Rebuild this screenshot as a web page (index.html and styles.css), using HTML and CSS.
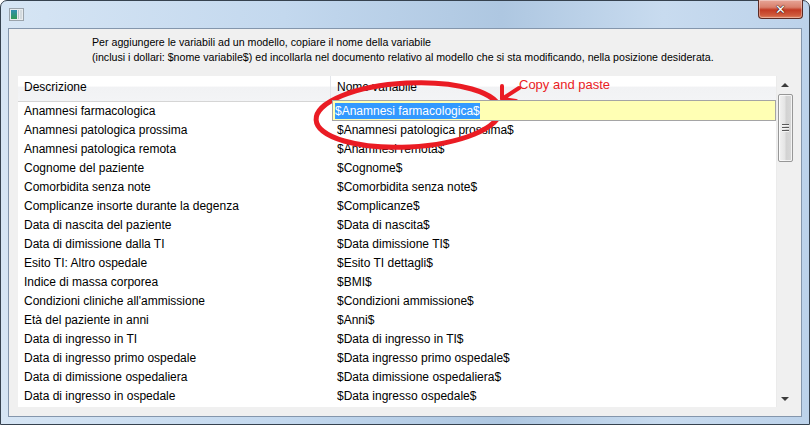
FILE: index.html
```html
<!DOCTYPE html>
<html>
<head>
<meta charset="utf-8">
<link rel="stylesheet" href="styles.css">
</head>
<body>
<div class="window">
  <div class="titlebar">
    <svg class="app-icon" width="15" height="13" viewBox="0 0 15 13">
      <defs>
        <linearGradient id="ig" x1="0" y1="0" x2="0" y2="1">
          <stop offset="0" stop-color="#2f8fb0"/>
          <stop offset="1" stop-color="#2f9a55"/>
        </linearGradient>
      </defs>
      <rect x="0.5" y="0.5" width="14" height="12" fill="#e8ecef" stroke="#9aa3ab"/>
      <rect x="2" y="2" width="6" height="9" fill="url(#ig)"/>
      <rect x="9" y="2" width="1" height="9" fill="#b9c2c9"/>
      <rect x="11" y="2" width="2" height="9" fill="#d3dadf"/>
    </svg>
    <div class="close-btn"><span class="close-x">✕</span></div>
  </div>
  <div class="client">
    <div class="instructions">
      <div>Per aggiungere le variabili ad un modello, copiare il nome della variabile</div>
      <div>(inclusi i dollari: $nome variabile$) ed incollarla nel documento relativo al modello che si sta modificando, nella posizione desiderata.</div>
    </div>
    <div class="list">
      <div class="table">
        <div class="header">
          <div class="hcell col1">Descrizione</div>
          <div class="hcell col2">Nome variabile</div>
        </div>
        <div class="row">
          <div class="cell col1">Anamnesi farmacologica</div>
          <div class="cell col2 editing"><div class="editor"><span class="sel">$Anamnesi farmacologica$</span></div></div>
        </div>
        <div class="row"><div class="cell col1">Anamnesi patologica prossima</div><div class="cell col2">$Anamnesi patologica prossima$</div></div>
        <div class="row"><div class="cell col1">Anamnesi patologica remota</div><div class="cell col2">$Anamnesi remota$</div></div>
        <div class="row"><div class="cell col1">Cognome del paziente</div><div class="cell col2">$Cognome$</div></div>
        <div class="row"><div class="cell col1">Comorbidita senza note</div><div class="cell col2">$Comorbidita senza note$</div></div>
        <div class="row"><div class="cell col1">Complicanze insorte durante la degenza</div><div class="cell col2">$Complicanze$</div></div>
        <div class="row"><div class="cell col1">Data di nascita del paziente</div><div class="cell col2">$Data di nascita$</div></div>
        <div class="row"><div class="cell col1">Data di dimissione dalla TI</div><div class="cell col2">$Data dimissione TI$</div></div>
        <div class="row"><div class="cell col1">Esito TI: Altro ospedale</div><div class="cell col2">$Esito TI dettagli$</div></div>
        <div class="row"><div class="cell col1">Indice di massa corporea</div><div class="cell col2">$BMI$</div></div>
        <div class="row"><div class="cell col1">Condizioni cliniche all'ammissione</div><div class="cell col2">$Condizioni ammissione$</div></div>
        <div class="row"><div class="cell col1">Età del paziente in anni</div><div class="cell col2">$Anni$</div></div>
        <div class="row"><div class="cell col1">Data di ingresso in TI</div><div class="cell col2">$Data di ingresso in TI$</div></div>
        <div class="row"><div class="cell col1">Data di ingresso primo ospedale</div><div class="cell col2">$Data ingresso primo ospedale$</div></div>
        <div class="row"><div class="cell col1">Data di dimissione ospedaliera</div><div class="cell col2">$Data dimissione ospedaliera$</div></div>
        <div class="row"><div class="cell col1">Data di ingresso in ospedale</div><div class="cell col2">$Data ingresso ospedale$</div></div>
      </div>
      <div class="scrollbar">
        <div class="sb-btn"><span class="tri-up"></span></div>
        <div class="thumb"><span class="grip"></span><span class="grip"></span><span class="grip"></span></div>
        <div class="sb-space"></div>
        <div class="sb-btn"><span class="tri-down"></span></div>
      </div>
    </div>
  </div>
</div>
<svg class="annotation" width="810" height="425" viewBox="0 0 810 425">
  <ellipse cx="408" cy="115" rx="92" ry="32" transform="rotate(-3 408 115)" fill="none" stroke="#ea1c24" stroke-width="5"/>
  <path d="M519 88 L502 99 M502 86 L502 99 L516 101" fill="none" stroke="#ea1c24" stroke-width="4" stroke-linecap="round" stroke-linejoin="round"/>
</svg>
<div class="note">Copy and paste</div>
</body>
</html>
```
FILE: styles.css
```css
html, body {
  margin: 0;
  padding: 0;
  background: #ffffff;
}
body {
  position: relative;
  width: 810px;
  height: 425px;
  overflow: hidden;
  font-family: "Liberation Sans", Arial, sans-serif;
  font-size: 12px;
  color: #000;
}
.window {
  width: 810px;
  height: 425px;
  box-sizing: border-box;
  border: 1px solid #36424f;
  border-radius: 7px 7px 0 0;
  background: linear-gradient(90deg, #d6e5f4 0%, #c3d8ee 35%, #aec7e1 62%, #c8dbef 82%, #bcd2ea 100%);
  display: flex;
  flex-direction: column;
}
.titlebar {
  height: 27px;
  display: flex;
  align-items: flex-start;
  padding-left: 8px;
}
.app-icon {
  margin-top: 7px;
  display: block;
}
.close-btn {
  margin-left: auto;
  margin-right: 6px;
  margin-top: -1px;
  width: 45px;
  height: 19px;
  box-sizing: border-box;
  border: 1px solid #5b2a24;
  border-top: none;
  border-radius: 0 0 4px 4px;
  background: linear-gradient(180deg, #e7a597 0%, #d9806c 40%, #c23a23 55%, #cf5a3c 85%, #e08866 100%);
  box-shadow: inset 0 0 0 1px rgba(255,255,255,0.35);
  display: flex;
  align-items: center;
  justify-content: center;
}
.close-x {
  color: #ffffff;
  font-family: "DejaVu Sans", sans-serif;
  font-weight: bold;
  font-size: 13px;
  line-height: 13px;
  text-shadow: 0 0 1px #3a1a16, 0 0 1px #3a1a16, 0 0 1px #3a1a16;
}
.client {
  flex: 1;
  margin: 0 7px 7px 7px;
  border: 1px solid #8496ac;
  background: #f0f0f0;
  display: flex;
  flex-direction: column;
}
.instructions {
  padding: 6px 0 0 83px;
  font-size: 10.65px;
  line-height: 15px;
  color: #000;
}
.list {
  margin: 11px 8px 9px 9px;
  flex: 1;
  display: flex;
  background: #ffffff;
  min-height: 0;
}
.table {
  flex: 1;
  overflow: hidden;
  background: #ffffff;
}
.header {
  height: 26px;
  box-sizing: border-box;
  display: flex;
  background: linear-gradient(180deg, #ffffff 0%, #ffffff 40%, #f1f2f4 45%, #f3f4f6 100%);
  border-bottom: 1px solid #d5d5d5;
}
.hcell {
  line-height: 23px;
  padding-left: 6px;
  box-sizing: border-box;
}
.hcell.col1 {
  border-right: 1px solid #e3e6eb;
}
.col1 {
  width: 313px;
  flex: none;
  box-sizing: border-box;
  padding-left: 6px;
}
.col2 {
  flex: 1;
  padding-left: 6px;
}
.row {
  height: 19px;
  display: flex;
  line-height: 19px;
  white-space: nowrap;
}
.cell {
  overflow: hidden;
}
.editing {
  position: relative;
  overflow: visible;
}
.editor {
  position: absolute;
  left: 1px;
  right: 0;
  top: -2px;
  height: 21px;
  box-sizing: border-box;
  border: 1px solid #a5a5a5;
  background: #ffffb4;
  padding-left: 2px;
  display: flex;
  align-items: center;
  z-index: 1;
}
.sel {
  background: #3399ff;
  color: #ffffff;
  line-height: 16px;
}
.scrollbar {
  width: 17px;
  flex: none;
  background: #f0f0f0;
  border-left: 1px solid #ebebeb;
  box-sizing: border-box;
  display: flex;
  flex-direction: column;
  align-items: center;
}
.sb-btn {
  height: 17px;
  width: 100%;
  display: flex;
  align-items: center;
  justify-content: center;
}
.tri-up {
  width: 0;
  height: 0;
  border-left: 4px solid transparent;
  border-right: 4px solid transparent;
  border-bottom: 4px solid #3c3c3c;
}
.tri-down {
  width: 0;
  height: 0;
  border-left: 4px solid transparent;
  border-right: 4px solid transparent;
  border-top: 4px solid #3c3c3c;
}
.thumb {
  margin-top: 1px;
  width: 15px;
  height: 68px;
  box-sizing: border-box;
  border: 1px solid #979797;
  border-radius: 2px;
  background: linear-gradient(90deg, #f2f2f2 0%, #e4e4e4 45%, #d2d2d2 55%, #d8d8d8 100%);
  box-shadow: inset 0 0 0 1px rgba(255,255,255,0.7);
  display: flex;
  flex-direction: column;
  align-items: center;
  justify-content: center;
  gap: 1px;
}
.grip {
  width: 7px;
  height: 1px;
  background: #5a5a5a;
  border-bottom: 1px solid #f4f4f4;
}
.sb-space {
  flex: 1;
}
.annotation {
  position: absolute;
  left: 0;
  top: 0;
  pointer-events: none;
}
.note {
  position: absolute;
  left: 519px;
  top: 77px;
  font-family: "Liberation Sans", Arial, sans-serif;
  font-size: 13px;
  line-height: 15px;
  color: #ea1c24;
}
```
